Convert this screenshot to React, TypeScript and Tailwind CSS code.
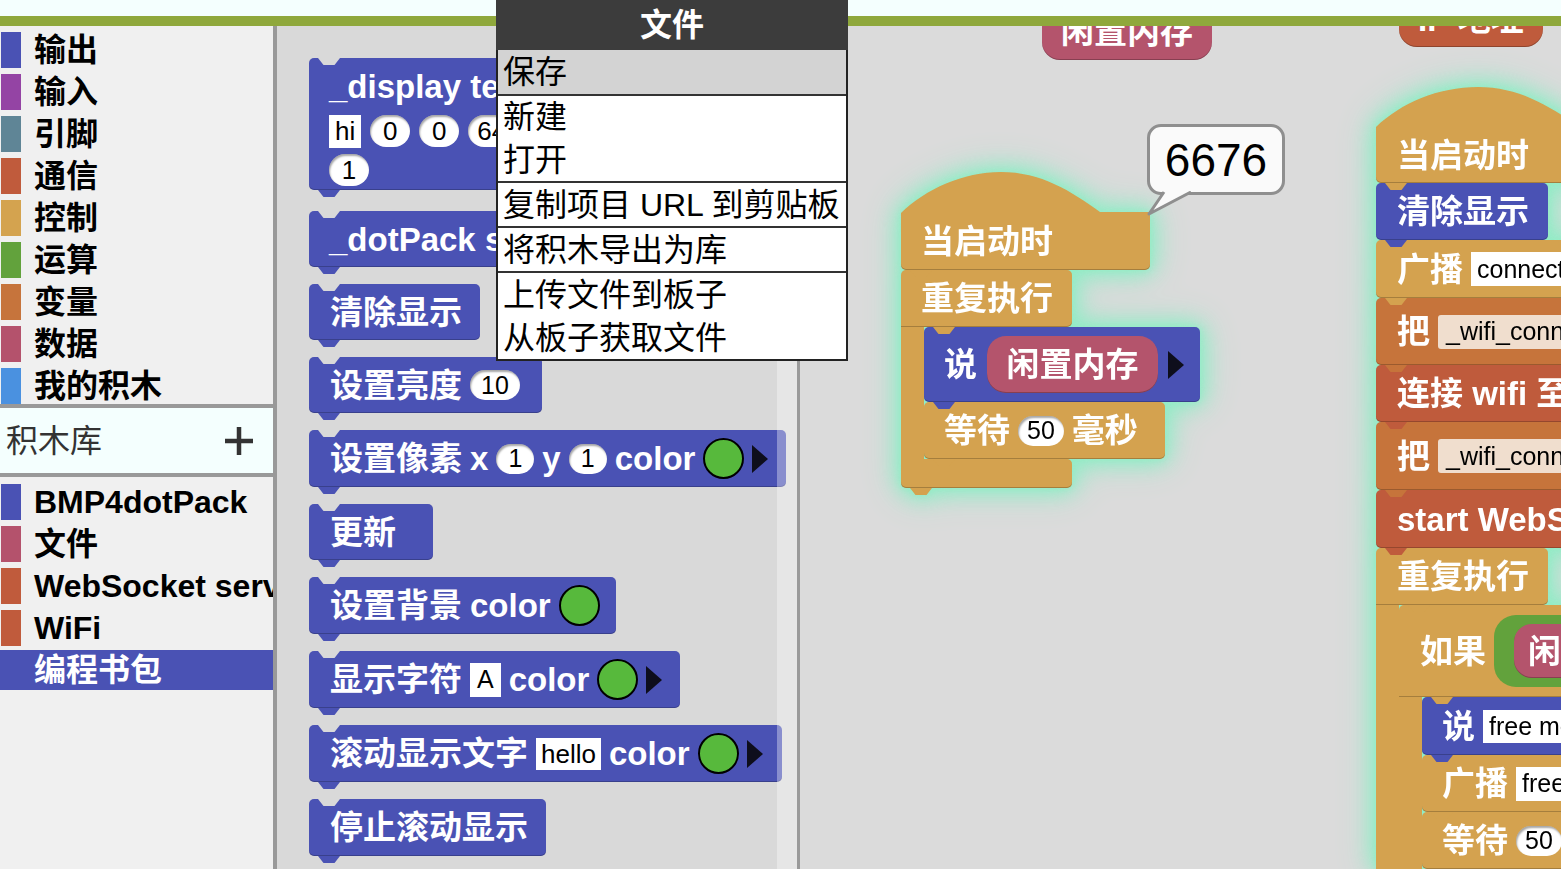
import React from 'react';

const F = "font-['Liberation_Sans','Noto_Sans_CJK_SC',sans-serif]";
const NOTCH = "[clip-path:polygon(0_0,100%_0,75%_100%,25%_100%)]";
const ROW = 'flex items-center gap-[8px]';

const BLUE = 'bg-[#4a52b4]';
const CTRL = 'bg-[#d4a24f]';
const VARC = 'bg-[#c6743b]';
const COMM = 'bg-[#bf5b3c]';
const DATA = 'bg-[#b4546c]';
const OPER = 'bg-[#62a23c]';
const FLYBG = 'bg-[#d9d9d9]';
const CANBG = 'bg-[#dbdbdb]';

type CmdProps = {
  bg: string;
  notch?: string;
  className?: string;
  children?: React.ReactNode;
  tab?: boolean;
};

function Cmd({ bg, notch, className = '', children, tab = true }: CmdProps) {
  return (
    <div
      className={`relative shrink-0 rounded-[5px] text-white font-bold text-[33px] leading-none shadow-[inset_0_-1px_0_rgba(0,0,0,0.22)] ${bg} ${className}`}
    >
      {notch && <div className={`absolute top-0 left-[9px] w-[22px] h-[7px] ${notch} ${NOTCH}`} />}
      {children}
      {tab && <div className={`absolute top-full left-[9px] w-[22px] h-[7px] z-10 ${bg} ${NOTCH}`} />}
    </div>
  );
}

function Num({ v, className = '' }: { v: string; className?: string }) {
  return (
    <span
      className={`shrink-0 bg-white rounded-full h-[30px] min-w-[38px] px-[9px] flex items-center justify-center text-black font-normal text-[25px] leading-none shadow-[inset_1px_2px_2px_rgba(0,0,0,0.35)] ${className}`}
    >
      {v}
    </span>
  );
}

function Txt({ v, className = '' }: { v: string; className?: string }) {
  return (
    <span
      className={`shrink-0 bg-white h-[32px] px-[4px] flex items-center text-black font-normal text-[25px] leading-none ${className}`}
    >
      {v}
    </span>
  );
}

function Swatch() {
  return <span className="shrink-0 w-[41px] h-[41px] rounded-full bg-[#57b93c] border-[2.5px] border-black" />;
}

function Arrow() {
  return (
    <span className="shrink-0 w-0 h-0 border-y-[14px] border-y-transparent border-l-[16px] border-l-[#0e0e1c]" />
  );
}

const cats: [string, string][] = [
  ['输出', 'bg-[#4a52b4]'],
  ['输入', 'bg-[#9444a4]'],
  ['引脚', 'bg-[#5f8596]'],
  ['通信', 'bg-[#c05b3c]'],
  ['控制', 'bg-[#d4a34f]'],
  ['运算', 'bg-[#62a23c]'],
  ['变量', 'bg-[#c6743c]'],
  ['数据', 'bg-[#b4526c]'],
  ['我的积木', 'bg-[#4a91e0]'],
];

const libs: [string, string][] = [
  ['BMP4dotPack', 'bg-[#4a52b4]'],
  ['文件', 'bg-[#b4526c]'],
  ['WebSocket server', 'bg-[#c05b3c]'],
  ['WiFi', 'bg-[#c05b3c]'],
];

function LeftPanel() {
  return (
    <div className="w-[273px] h-full bg-[#f0f0f0] flex flex-col overflow-hidden shrink-0">
      <div className="pt-[6px] flex flex-col gap-[6px]">
        {cats.map(([t, c]) => (
          <div key={t} className="h-[36px] flex items-center">
            <div className={`ml-[1px] w-[20px] h-full ${c}`} />
            <span className="ml-[13px] text-[32px] font-bold text-black leading-none whitespace-nowrap">{t}</span>
          </div>
        ))}
      </div>
      <div className="h-[4px] bg-[#999999] shrink-0" />
      <div className="h-[65px] bg-[#f4fffe] flex items-center justify-between pl-[6px] pr-[18px] shrink-0">
        <span className="text-[32px] text-[#333333] leading-none">积木库</span>
        <svg width="32" height="32" viewBox="0 0 32 32">
          <path d="M16 2 V30 M2 16 H30" stroke="#333333" strokeWidth="4.5" />
        </svg>
      </div>
      <div className="h-[4px] bg-[#999999] shrink-0" />
      <div className="pt-[7px] flex flex-col gap-[6px]">
        {libs.map(([t, c]) => (
          <div key={t} className="h-[36px] flex items-center">
            <div className={`ml-[1px] w-[20px] h-full shrink-0 ${c}`} />
            <span className="ml-[13px] text-[32px] font-bold text-black leading-none whitespace-nowrap">{t}</span>
          </div>
        ))}
        <div className="h-[40px] -mt-[2px] bg-[#4a52b4] flex items-center">
          <span className="ml-[34px] text-[32px] font-bold text-white leading-none">编程书包</span>
        </div>
      </div>
    </div>
  );
}

function Flyout() {
  return (
    <div className={`relative w-[520px] h-full shrink-0 ${FLYBG} overflow-hidden`}>
      <div className="pl-[32px] pt-[32px] flex flex-col items-start gap-[17px]">
        <Cmd bg={BLUE} notch={FLYBG} className="w-[520px] h-[132px] pl-[20px] pt-[8px] flex flex-col items-start">
          <div className="h-[40px] flex items-center whitespace-nowrap">_display text</div>
          <div className="mt-[8px] h-[34px] flex items-center gap-[9px]">
            <Txt v="hi" className="h-[33px] px-[6px] text-[26px]" />
            <Num v="0" className="h-[32px] min-w-[40px] text-[26px]" />
            <Num v="0" className="h-[32px] min-w-[40px] text-[26px]" />
            <Num v="64" className="h-[32px] min-w-[40px] text-[26px]" />
          </div>
          <div className="mt-[5px] h-[34px] flex items-center">
            <Num v="1" className="h-[32px] min-w-[40px] text-[26px]" />
          </div>
        </Cmd>
        <Cmd bg={BLUE} notch={FLYBG} className={`mt-[4px] w-[480px] h-[56px] pl-[20px] ${ROW}`}>
          <span className="whitespace-nowrap">_dotPack show</span>
        </Cmd>
        <Cmd bg={BLUE} notch={FLYBG} className={`w-[171px] h-[56px] pl-[21px] ${ROW}`}>
          <span>清除显示</span>
        </Cmd>
        <Cmd bg={BLUE} notch={FLYBG} className={`w-[233px] h-[56px] pl-[21px] ${ROW}`}>
          <span>设置亮度</span>
          <Num v="10" className="h-[29px] px-[11px]" />
        </Cmd>
        <Cmd bg={BLUE} notch={FLYBG} className={`w-[477px] h-[57px] pl-[21px] ${ROW}`}>
          <span>设置像素</span>
          <span>x</span>
          <Num v="1" />
          <span>y</span>
          <Num v="1" />
          <span>color</span>
          <Swatch />
          <Arrow />
        </Cmd>
        <Cmd bg={BLUE} notch={FLYBG} className={`w-[124px] h-[56px] pl-[21px] ${ROW}`}>
          <span>更新</span>
        </Cmd>
        <Cmd bg={BLUE} notch={FLYBG} className={`w-[307px] h-[57px] pl-[21px] ${ROW}`}>
          <span>设置背景</span>
          <span>color</span>
          <Swatch />
        </Cmd>
        <Cmd bg={BLUE} notch={FLYBG} className={`w-[371px] h-[57px] pl-[21px] ${ROW}`}>
          <span>显示字符</span>
          <Txt v="A" className="h-[34px] px-[7px]" />
          <span>color</span>
          <Swatch />
          <Arrow />
        </Cmd>
        <Cmd bg={BLUE} notch={FLYBG} className={`w-[473px] h-[57px] pl-[21px] ${ROW}`}>
          <span>滚动显示文字</span>
          <Txt v="hello" className="px-[5px] text-[26px]" />
          <span>color</span>
          <Swatch />
          <Arrow />
        </Cmd>
        <Cmd bg={BLUE} notch={FLYBG} className={`w-[237px] h-[57px] pl-[21px] ${ROW}`}>
          <span>停止滚动显示</span>
        </Cmd>
        <Cmd bg={BLUE} notch={FLYBG} className={`w-[300px] h-[57px] pl-[21px] ${ROW}`}>
          <span>显示</span>
        </Cmd>
      </div>
      <div className="absolute right-0 top-0 bottom-0 w-[20px] bg-white/35 z-20" />
    </div>
  );
}

function Reporter({ bg, className = '', children }: { bg: string; className?: string; children: React.ReactNode }) {
  return (
    <div
      className={`shrink-0 flex items-center justify-center text-white font-bold text-[33px] leading-none shadow-[inset_0_-1px_0_rgba(0,0,0,0.25)] ${bg} ${className}`}
    >
      {children}
    </div>
  );
}

function Canvas() {
  const GLOW =
    '[filter:drop-shadow(0_0_3px_#92ecc6)_drop-shadow(0_0_10px_#92ecc6)_drop-shadow(0_0_14px_#9ae8c8)]';
  return (
    <div className={`relative flex-1 h-full ${CANBG} overflow-hidden`}>
      {/* top reporters cut off */}
      <Reporter bg={DATA} className="absolute left-[242px] top-[-23px] w-[170px] h-[57px] rounded-[18px]">
        闲置内存
      </Reporter>
      <Reporter bg={COMM} className="absolute left-[599px] top-[-35px] w-[144px] h-[56px] rounded-[18px]">
        IP 地址
      </Reporter>

      {/* script 1 */}
      <div className={`absolute left-[101px] top-[146px] flex flex-col items-start ${GLOW}`}>
        <div className="relative w-[249px]">
          <svg width="249" height="41" viewBox="0 0 249 41" className="block">
            <path d="M0 41 C 25 17, 62 0, 100 0 C 140 0, 170 19, 199 40 L 249 40 L 249 41 Z" fill="#d4a24f" />
          </svg>
          <Cmd bg={CTRL} className={`w-[249px] h-[57px] pl-[20px] rounded-t-none ${ROW}`}>
            <span>当启动时</span>
          </Cmd>
        </div>
        <div className="flex flex-col items-start">
          <Cmd bg={CTRL} className={`w-[171px] h-[57px] pl-[20px] rounded-bl-none ${ROW}`} tab={false}>
            <span>重复执行</span>
          </Cmd>
          <div className="flex">
            <div className={`w-[23px] ${CTRL}`} />
            <div className="flex flex-col items-start">
              <Cmd bg={BLUE} notch={CTRL} className={`w-[276px] h-[75px] pl-[20px] ${ROW} gap-[10px]`}>
                <span>说</span>
                <Reporter bg={DATA} className="w-[171px] h-[57px] rounded-[19px]">
                  闲置内存
                </Reporter>
                <Arrow />
              </Cmd>
              <Cmd bg={CTRL} className={`w-[241px] h-[57px] pl-[20px] ${ROW}`}>
                <span>等待</span>
                <Num v="50" className="px-[9px]" />
                <span>毫秒</span>
              </Cmd>
            </div>
          </div>
          <Cmd bg={CTRL} className="w-[171px] h-[29px] rounded-tl-none" />
        </div>
      </div>

      {/* speech bubble */}
      <div className="absolute left-[347px] top-[98px] w-[138px] h-[71px] bg-[#fafafa] border-[3px] border-[#8f8f8f] rounded-[14px] flex items-center justify-center text-[46px] text-black leading-none">
        6676
      </div>
      <svg width="50" height="26" viewBox="0 0 50 26" className="absolute left-[346px] top-[165px]">
        <path d="M18 0 L3 23 L45 0 Z" fill="#fafafa" />
        <path d="M18 1 L3 23 L45 1" fill="none" stroke="#8f8f8f" strokeWidth="3" strokeLinejoin="round" />
      </svg>

      {/* script 2 */}
      <div className={`absolute left-[576px] top-[61px] flex flex-col items-start ${GLOW}`}>
        <div className="relative w-[400px]">
          <svg width="400" height="40" viewBox="0 0 400 40" className="block">
            <path d="M0 40 C 25 16, 62 0, 102 0 C 142 0, 172 18, 202 39 L 400 39 L 400 40 Z" fill="#d4a24f" />
          </svg>
          <Cmd bg={CTRL} className={`w-[400px] h-[56px] pl-[21px] rounded-t-none ${ROW}`}>
            <span>当启动时</span>
          </Cmd>
        </div>
        <Cmd bg={BLUE} className={`w-[172px] h-[57px] pl-[21px] ${ROW}`}>
          <span>清除显示</span>
        </Cmd>
        <Cmd bg={CTRL} className={`w-[400px] h-[58px] pl-[21px] ${ROW}`}>
          <span>广播</span>
          <Txt v="connecting" className="h-[34px] px-[6px]" />
        </Cmd>
        <Cmd bg={VARC} className={`w-[400px] h-[67px] pl-[21px] ${ROW}`}>
          <span>把</span>
          <span className="h-[34px] px-[8px] flex items-center bg-[#f0dece] text-black font-normal text-[25px] rounded-[3px]">
            _wifi_connected
          </span>
        </Cmd>
        <Cmd bg={COMM} className={`w-[400px] h-[57px] pl-[21px] ${ROW}`}>
          <span className="whitespace-nowrap">连接 wifi 至</span>
        </Cmd>
        <Cmd bg={VARC} className={`w-[400px] h-[68px] pl-[21px] ${ROW}`}>
          <span>把</span>
          <span className="h-[34px] px-[8px] flex items-center bg-[#f0dece] text-black font-normal text-[25px] rounded-[3px]">
            _wifi_connected
          </span>
        </Cmd>
        <Cmd bg={COMM} className={`w-[400px] h-[58px] pl-[21px] ${ROW}`}>
          <span className="whitespace-nowrap">start WebSocket server</span>
        </Cmd>
        <div className="flex flex-col items-start">
          <Cmd bg={CTRL} className={`w-[172px] h-[57px] pl-[21px] rounded-bl-none ${ROW}`} tab={false}>
            <span>重复执行</span>
          </Cmd>
          <div className="flex">
            <div className={`w-[23px] ${CTRL}`} />
            <div className="flex flex-col items-start">
              <Cmd bg={CTRL} notch={CTRL} className={`w-[400px] h-[92px] pl-[21px] rounded-bl-none ${ROW}`} tab={false}>
                <span>如果</span>
                <div className={`h-[72px] w-[300px] rounded-[22px] flex items-center pl-[20px] ${OPER}`}>
                  <Reporter bg={DATA} className="w-[170px] h-[54px] rounded-[18px] justify-start pl-[14px]">
                    闲置内存
                  </Reporter>
                </div>
              </Cmd>
              <div className="flex">
                <div className={`w-[23px] ${CTRL}`} />
                <div className="flex flex-col items-start">
                  <Cmd bg={BLUE} notch={CTRL} className={`w-[400px] h-[58px] pl-[20px] ${ROW}`}>
                    <span>说</span>
                    <Txt v="free memory" className="h-[33px] px-[6px]" />
                  </Cmd>
                  <Cmd bg={CTRL} className={`w-[400px] h-[57px] pl-[20px] ${ROW}`}>
                    <span>广播</span>
                    <Txt v="free memory" className="h-[34px] px-[6px]" />
                  </Cmd>
                  <Cmd bg={CTRL} className={`w-[400px] h-[57px] pl-[20px] ${ROW}`}>
                    <span>等待</span>
                    <Num v="50" />
                    <span>毫秒</span>
                  </Cmd>
                </div>
              </div>
            </div>
          </div>
        </div>
      </div>
    </div>
  );
}

function Menu() {
  const item = 'h-[43px] px-[5px] flex items-center text-[32px] text-black leading-none whitespace-nowrap';
  const sep = 'h-[2px] bg-[#333333] shrink-0';
  return (
    <div className="absolute left-[496px] top-0 w-[352px] h-[361px] bg-white border-2 border-t-0 border-[#222222] flex flex-col z-30">
      <div className="h-[50px] -mx-[2px] bg-[#3c3c3c] text-white font-bold text-[32px] flex items-center justify-center leading-none">
        文件
      </div>
      <div className={`${item} h-[44px] bg-[#d3d3d3]`}>保存</div>
      <div className={sep} />
      <div className={item}>新建</div>
      <div className={item}>打开</div>
      <div className={sep} />
      <div className={item}>复制项目 URL 到剪贴板</div>
      <div className={sep} />
      <div className={item}>将积木导出为库</div>
      <div className={sep} />
      <div className={item}>上传文件到板子</div>
      <div className={item}>从板子获取文件</div>
    </div>
  );
}

export default function App() {
  return (
    <div className={`w-[1561px] h-[869px] overflow-hidden relative bg-[#dbdbdb] ${F}`}>
      <div className="h-[16px] bg-[#f4fffe]" />
      <div className="h-[10px] bg-[#8fa83c]" />
      <div className="flex h-[843px]">
        <LeftPanel />
        <div className="w-[4px] bg-[#999999] shrink-0" />
        <Flyout />
        <div className="w-[3px] bg-[#9a9a9a] shrink-0" />
        <Canvas />
      </div>
      <Menu />
    </div>
  );
}
